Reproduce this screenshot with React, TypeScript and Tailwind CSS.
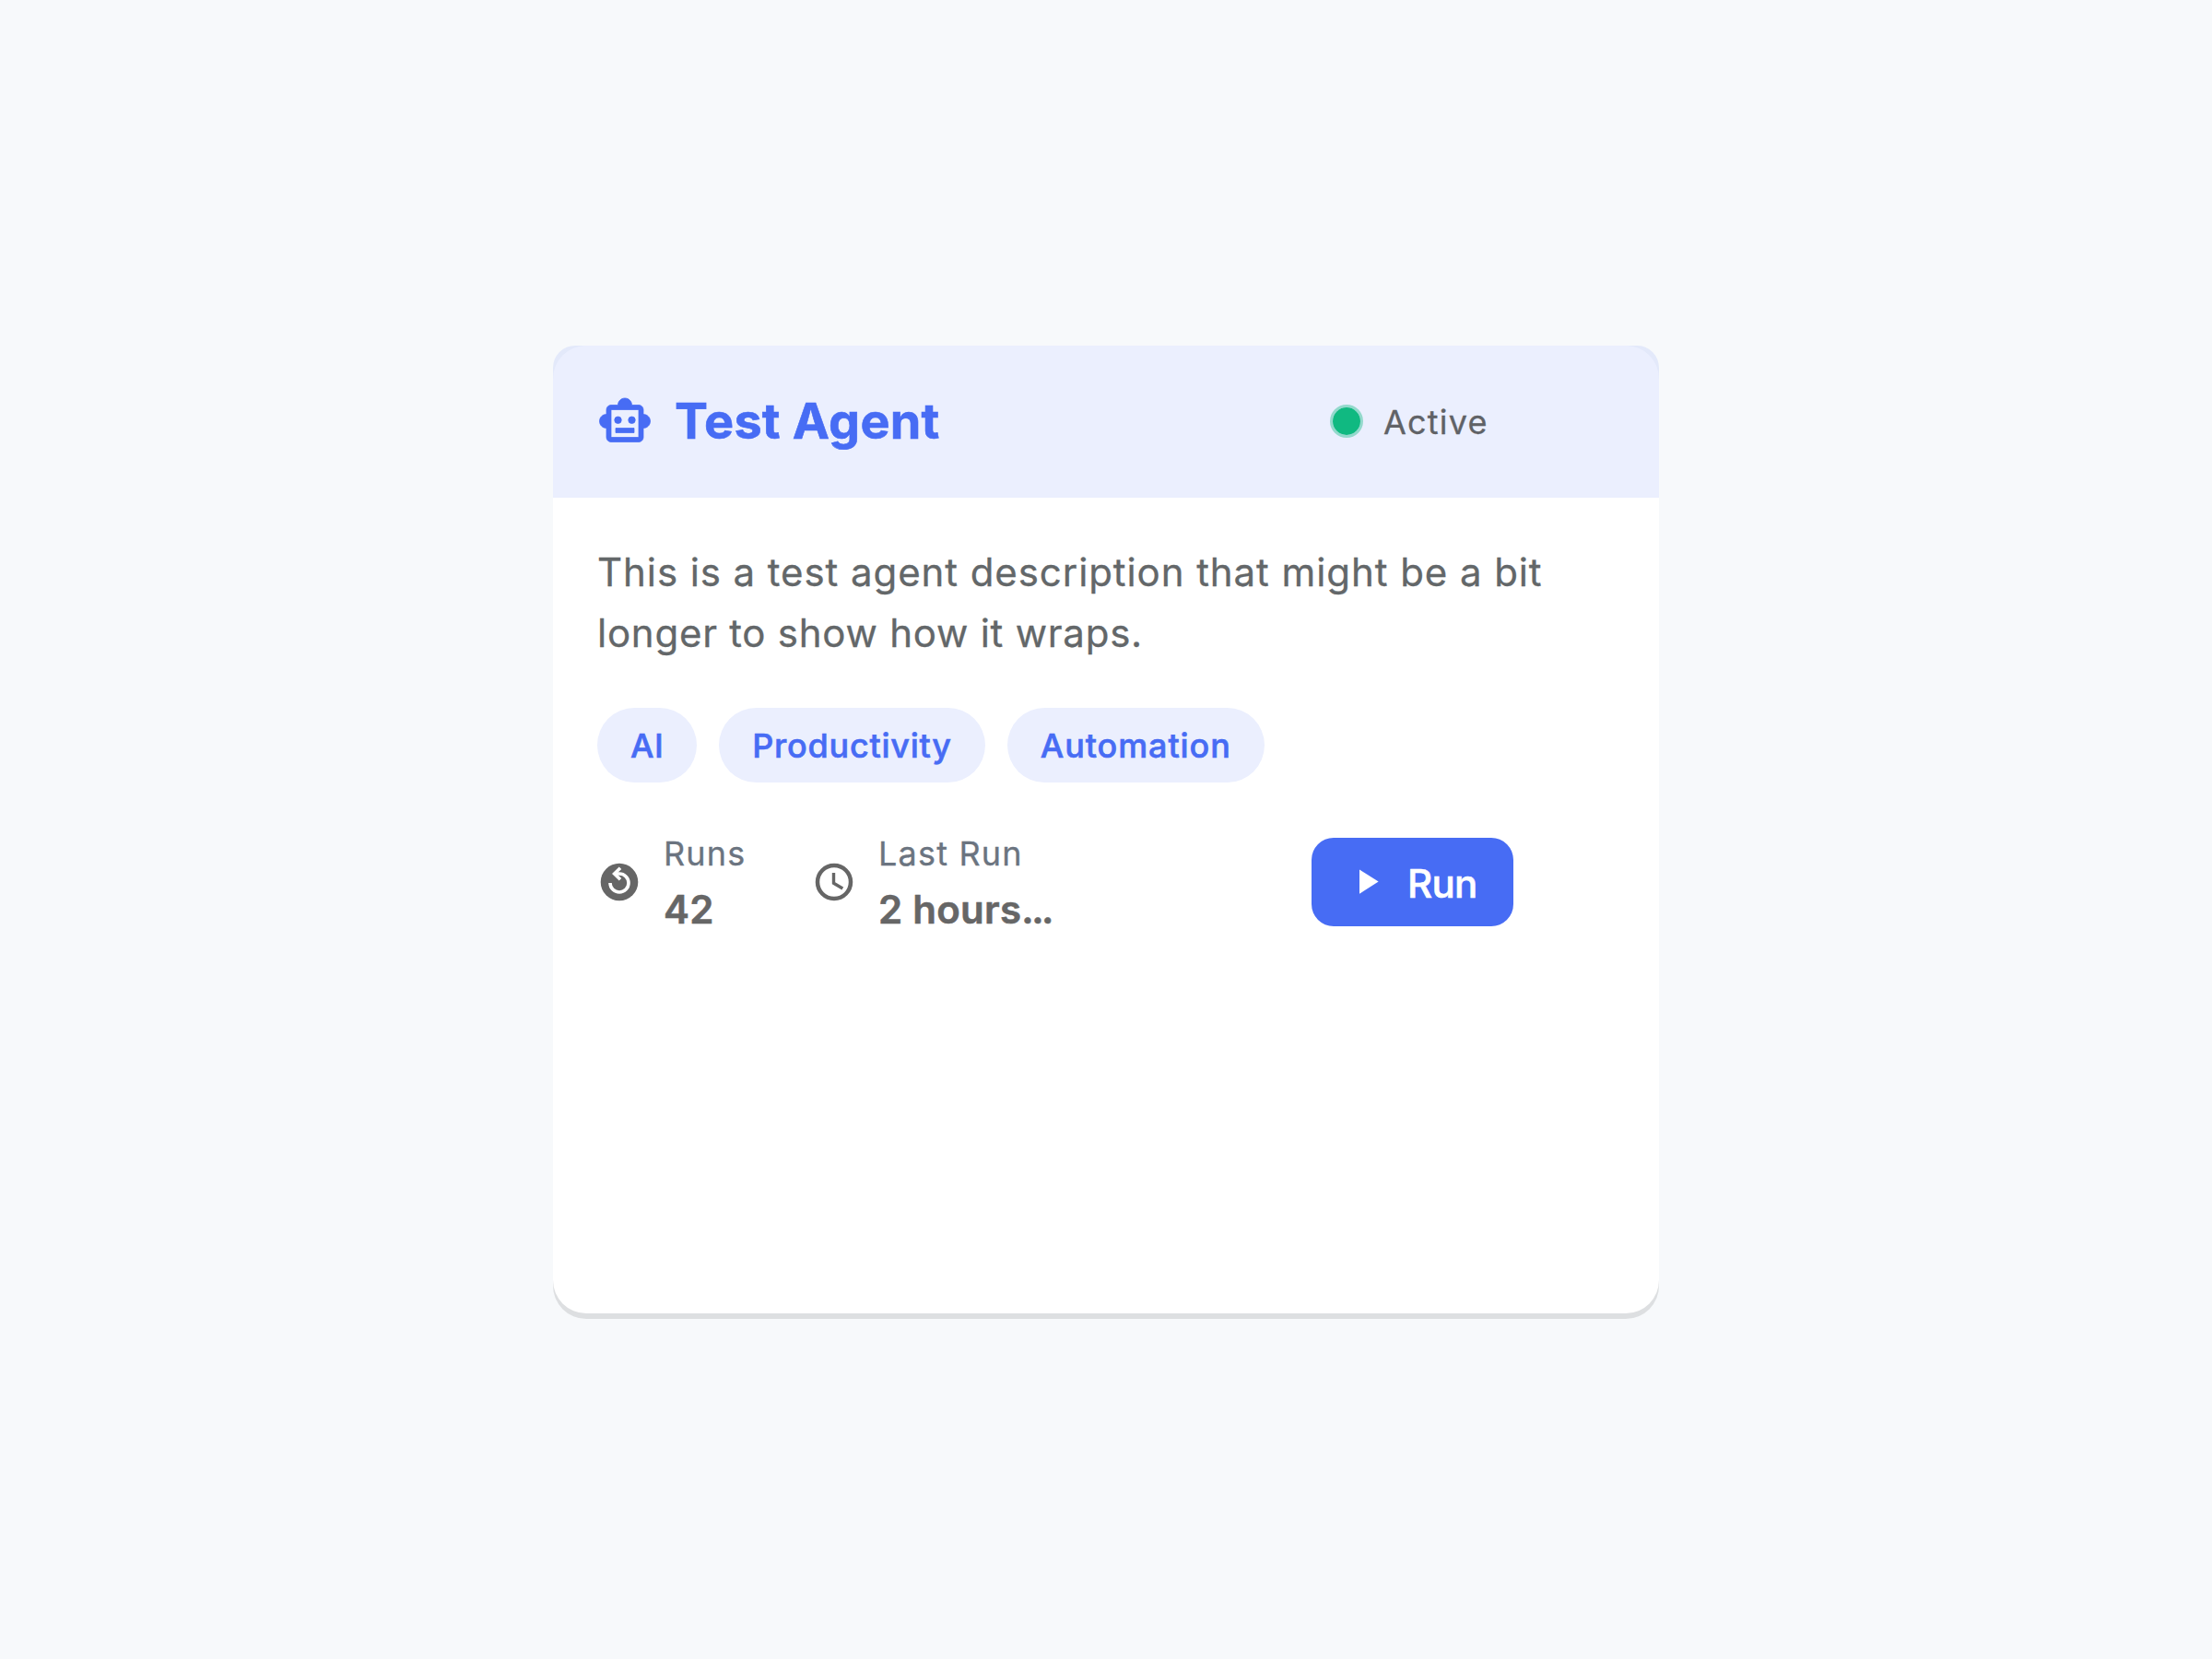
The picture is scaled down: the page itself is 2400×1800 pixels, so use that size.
import type { ReactNode } from "react";
import { MdPlayArrow } from "react-icons/md";

const tags = [
  { name: "AI", className: "w-[108.3px] tracking-[0.4px]" },
  { name: "Productivity", className: "w-[288.5px] tracking-[0.75px]" },
  { name: "Automation", className: "w-[279px] tracking-[0.9px]" },
];

function RobotIcon() {
  return (
    <svg viewBox="0 0 24 24" className="mb-px size-[60px] shrink-0 text-[#476cf4]" fill="currentColor" stroke="currentColor" strokeWidth="0.3">
      <path d="M20 9V7c0-1.1-.9-2-2-2h-3c0-1.66-1.34-3-3-3S9 3.34 9 5H6c-1.1 0-2 .9-2 2v2c-1.66 0-3 1.34-3 3s1.34 3 3 3v4c0 1.1.9 2 2 2h12c1.1 0 2-.9 2-2v-4c1.66 0 3-1.34 3-3s-1.34-3-3-3zm-2 10H6V7h12v12z" />
      <circle cx="9" cy="11.5" r="1.5" />
      <circle cx="15" cy="11.5" r="1.5" />
      <path d="M8 15h8v2H8z" />
    </svg>
  );
}

function ReplayIcon() {
  return (
    <svg viewBox="0 0 48 48" className="mb-px size-12 shrink-0" fill="none">
      <circle cx="24" cy="24" r="20.3" fill="#666666" />
      <path d="M14 25A10 10 0 1 0 24 15H19" stroke="white" strokeWidth="3.6" />
      <path d="M25 8.8L18.6 15L25 21.2" stroke="white" strokeWidth="3.6" />
    </svg>
  );
}

function ClockIcon() {
  return (
    <svg viewBox="0 0 48 48" className="mb-px size-12 shrink-0" fill="none" stroke="#666666">
      <circle cx="24" cy="24" r="18" strokeWidth="4.5" />
      <path d="M23.5 14V25.2L33.3 31" strokeWidth="3.4" />
    </svg>
  );
}

function Stat({ icon, label, value, truncated, className }: { icon: ReactNode; label: string; value: string; truncated?: boolean; className: string }) {
  return (
    <div className={`flex items-center gap-6 ${className}`}>
      {icon}
      <div className="flex flex-col whitespace-nowrap">
        <span className="-mt-px mb-px text-[36px] leading-[60px] tracking-[1.2px] text-[#6b7480] [-webkit-text-stroke-width:0.3px]">{label}</span>
        <span className="text-[42px] leading-[60px] font-semibold tracking-[0.25px] text-[#666666]">
          {value}
          {truncated && <span className="tracking-[-2.5px]">...</span>}
        </span>
      </div>
    </div>
  );
}

export default function App() {
  return (
    <div className="flex h-[1800px] w-[2400px] items-center justify-center bg-[#f7f9fb] font-['Inter',sans-serif] [-webkit-text-stroke-width:0.6px]">
      <div className="h-[1050px] w-[1200px] rounded-[36px] bg-white shadow-[0_6px_0_#dddfe1]">
        <header className="flex h-[165px] items-center rounded-t-[24px] bg-[#4a6cf71c] px-12">
          <RobotIcon />
          <h1 className="mb-0.5 ml-6 w-[711px] text-[54px] leading-[66px] font-bold tracking-[0.2px] text-[#476cf4]">Test Agent</h1>
          <div className="flex items-center gap-[22px]">
            <span className="mb-px size-9 rounded-full border-[3px] border-[#10b98166] bg-[#10b981] bg-clip-padding" />
            <span className="text-[36px] leading-[54px] tracking-[1.2px] text-[#606266] [-webkit-text-stroke-width:0.3px]">Active</span>
          </div>
        </header>
        <div className="p-12">
          <p className="text-[42px] leading-[66px] text-[#636769] [-webkit-text-stroke-width:0.3px]">
            <span className="block tracking-[0.92px]">This is a test agent description that might be a bit</span>
            <span className="block tracking-[0.75px]">longer to show how it wraps.</span>
          </p>
          <div className="mt-12 flex gap-6">
            {tags.map((tag) => (
              <span
                key={tag.name}
                className={`flex h-[81px] items-center justify-center rounded-full bg-[#ebeffe] text-[36px] font-medium text-[#476cf4] ${tag.className}`}
              >
                {tag.name}
              </span>
            ))}
          </div>
          <div className="mt-12 flex h-[120px] items-center">
            <Stat className="w-[233px]" icon={<ReplayIcon />} label="Runs" value="42" />
            <Stat className="w-[542px]" icon={<ClockIcon />} label="Last Run" value="2 hours" truncated />
            <button className="flex h-24 w-[219px] items-center rounded-[24px] bg-[#476cf4] pl-[37px] text-[42px] font-medium tracking-[-0.8px] text-white">
              <MdPlayArrow className="mr-[22px] mb-px size-[45px]" />
              <span className="pt-[3px]">Run</span>
            </button>
          </div>
        </div>
      </div>
    </div>
  );
}
